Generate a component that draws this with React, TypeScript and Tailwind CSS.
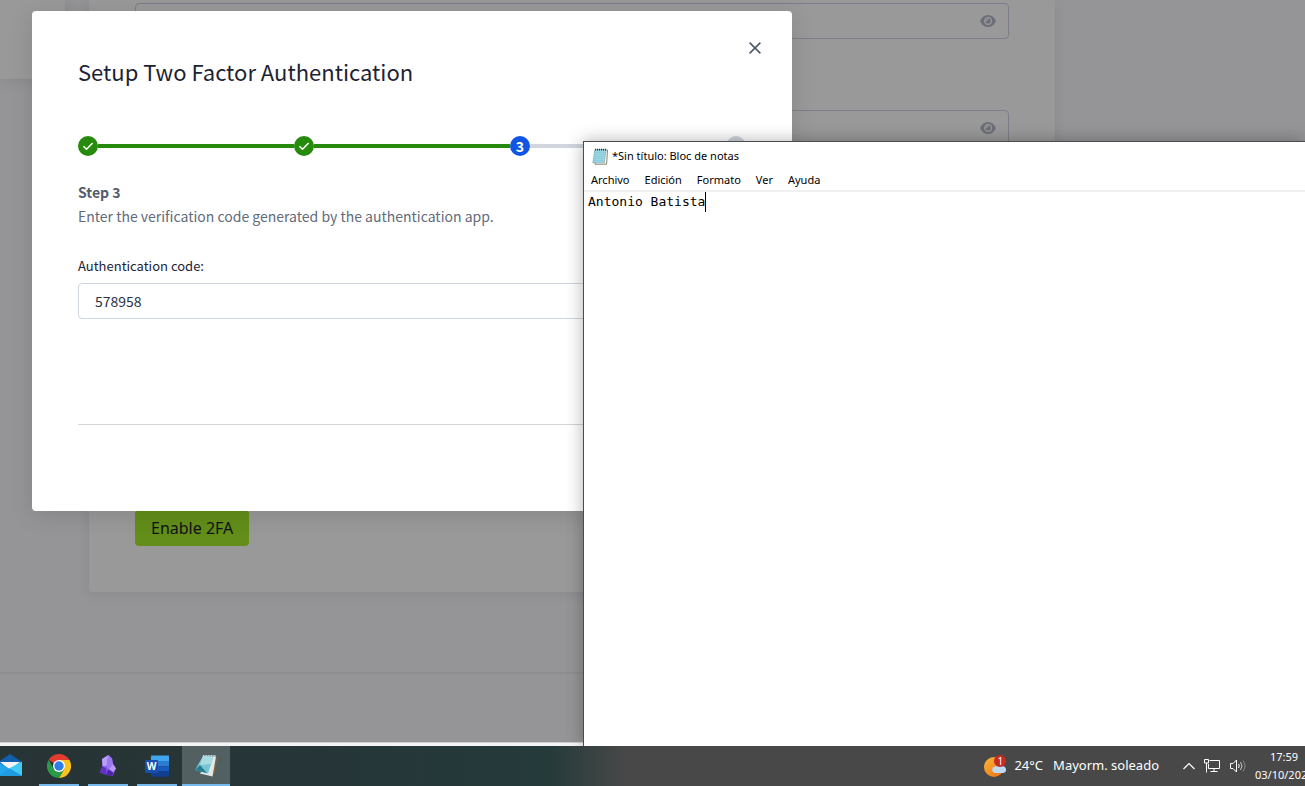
import React from "react";

const sourceSans = "font-['Noto_Sans_CJK_SC',sans-serif]";
const segoe = "font-['Noto_Sans','Open_Sans',sans-serif]";

function EyeIcon() {
  return (
    <svg width="16" height="12" viewBox="0 0 16 12">
      <path d="M0 6Q2.600 0 8 0T16 6Q13.400 12 8 12T0 6z" fill="currentColor" />
      <circle cx="8" cy="6" r="3.4" fill="none" stroke="white" strokeWidth="1.2" />
      <path d="M5.200 5.800A2 2 0 0 0 7.800 3.200" fill="white" stroke="white" strokeWidth=".8" />
    </svg>
  );
}

function PasswordField({ id, label }: { id: string; label: string }) {
  return (
    <div className="flex h-9 w-full items-center rounded border border-[#cdd3df] pr-3">
      <input id={id} type="password" aria-label={label} className="h-full min-w-0 flex-1 bg-transparent px-4 outline-none" />
      <button type="button" aria-label="Show password" className="text-[#b4bac6]">
        <EyeIcon />
      </button>
    </div>
  );
}

function SettingsPage() {
  return (
    <div className="flex flex-1 flex-col bg-[#f8f8fc]">
      <div className="flex items-start gap-6">
        <aside className="h-[79px] w-[65px] shrink-0 bg-white shadow-[0_2px_12px_rgba(60,60,80,0.1)]" />
        <section className="w-[966px] rounded-b bg-white px-[46px] pt-[3px] pb-[46px] shadow-[0_2px_12px_rgba(60,60,80,0.1)]">
          <PasswordField id="new-password" label="New password" />
          <div className="h-[71px]" />
          <PasswordField id="repeat-password" label="Repeat password" />
          <button
            type="button"
            className="mt-[364px] flex h-9 items-center rounded bg-[#a3ed2a] px-4 font-['Noto_Sans','Open_Sans',sans-serif] text-base text-[#1b2030]"
          >
            Enable 2FA
          </button>
        </section>
      </div>
      <footer className="mt-20 flex-1 border-t-2 border-[#ededf0]" />
    </div>
  );
}

function Check() {
  return (
    <svg width="12" height="12" viewBox="0 0 12 12" fill="none" stroke="white" strokeWidth="1.5">
      <path d="M1.4 6.2 4.5 9.2 10.6 3" />
    </svg>
  );
}

function Stepper() {
  const dot = "flex size-5 shrink-0 items-center justify-center rounded-full text-sm leading-5 font-bold";
  return (
    <ol className="flex items-center">
      <li className={`${dot} bg-[#268a0c]`}><Check /></li>
      <li aria-hidden="true" className="h-1 flex-1 bg-[#268a0c]" />
      <li className={`${dot} bg-[#268a0c]`}><Check /></li>
      <li aria-hidden="true" className="h-1 flex-1 bg-[#268a0c]" />
      <li className={`${dot} bg-[#1254e4] text-white`}>3</li>
      <li aria-hidden="true" className="h-1 flex-1 bg-[#d0d5de]" />
      <li className={`${dot} bg-[#d0d5de] text-[#1d2333]`}>4</li>
    </ol>
  );
}

function TwoFactorDialog() {
  return (
    <div
      role="dialog"
      aria-labelledby="dialog-title"
      className={`absolute top-[11px] left-8 w-[760px] rounded bg-white px-[46px] pt-[42px] pb-[86px] shadow-[0_4px_24px_rgba(0,0,0,0.12)] ${sourceSans}`}
    >
      <button type="button" aria-label="Close" className="absolute top-7 right-7 flex size-[18px] items-center justify-center text-[#4f586b]">
        <svg width="12" height="12" viewBox="0 0 12 12" fill="none" stroke="currentColor" strokeWidth="1.6">
          <path d="M.6.6 11.4 11.4M11.4.6.6 11.4" />
        </svg>
      </button>
      <h1 id="dialog-title" className="mb-[47px] text-[22px] leading-9 text-[#1d2333]">Setup Two Factor Authentication</h1>
      <Stepper />
      <h2 className="mt-6 text-sm leading-6 font-bold text-[#545c6d]">Step 3</h2>
      <p className="text-sm leading-6 text-[#626b7c]">Enter the verification code generated by the authentication app.</p>
      <label htmlFor="code" className="mt-7 mb-[7px] block text-[13px] leading-5 text-[#1d2333]">Authentication code:</label>
      <input id="code" defaultValue="578958" className="h-9 w-full rounded border border-[#cfd5df] px-4 text-sm text-[#2b3245] outline-none" />
      <hr className="mt-[105px] border-[#d5d5d8]" />
    </div>
  );
}

function NotepadIcon() {
  return (
    <svg width="16" height="17" viewBox="0 0 16 17">
      <path d="M3.5 2H15.5L14.6 16.2H3z" fill="#fff" stroke="#8f8164" />
      <path d="M2.8 1.8H14L12.3 14.8H.8z" fill="#9bd6e4" stroke="#6aa5b5" strokeWidth=".6" />
      <path d="M3 4.5h10M2.7 6.5h10M2.4 8.5h10M2.1 10.5h10M1.8 12.5h10" stroke="#7fc0d0" strokeWidth=".5" />
      <path d="M3 1.6h11" stroke="#334" strokeWidth="1.6" strokeDasharray="1 1" />
    </svg>
  );
}

function NotepadWindow() {
  return (
    <div className="absolute top-[141px] right-0 bottom-0 left-[583px] flex flex-col border-t border-l border-[#4b4b4d] bg-white shadow-[0_0_16px_rgba(0,0,0,0.3)]">
      <header className={`flex h-[29px] items-center gap-1 pl-2 text-black ${segoe}`}>
        <NotepadIcon />
        <h2 className="text-[11px]">*Sin título: Bloc de notas</h2>
      </header>
      <nav className={`flex h-[21px] items-center gap-[15px] border-b-2 border-[#f0f0f0] pl-[7px] text-[11px] text-black ${segoe}`}>
        <button type="button">Archivo</button>
        <button type="button">Edición</button>
        <button type="button">Formato</button>
        <button type="button">Ver</button>
        <button type="button">Ayuda</button>
      </nav>
      <div role="textbox" aria-label="Editor" className="flex flex-1 items-start pl-1 font-['DejaVu_Sans_Mono',monospace] text-[13px] leading-5 text-black">
        <span className="border-r border-black">Antonio Batista</span>
      </div>
    </div>
  );
}

function MailIcon() {
  return (
    <svg width="22" height="24" viewBox="0 0 22 24">
      <path d="M-2 8 10 0 22 8v4H-2z" fill="#0f5fae" />
      <path d="M0 8h20L10 16z" fill="#f4f4f4" />
      <path d="M-2 8 22 22H-2z" fill="#23a7ec" />
      <path d="M22 7.5V22L9 14.6z" fill="#43cbf8" />
      <path d="M-2 22 9.5 14.5 22 22z" fill="#1f9be2" />
    </svg>
  );
}

function ChromeIcon() {
  return (
    <svg width="24" height="24" viewBox="0 0 24 24">
      <path d="M12 12 1.6 6A12 12 0 0 1 22.4 6z" fill="#e33b2e" />
      <path d="M12 6H22.4A12 12 0 0 1 12 24L17.2 15z" fill="#fcc31e" />
      <path d="M1.6 6 6.8 15 12 18l5.2-3L12 24A12 12 0 0 1 1.6 6z" fill="#2a9a48" />
      <circle cx="12" cy="12" r="6" fill="#fff" />
      <circle cx="12" cy="12" r="4.7" fill="#2f7de9" />
    </svg>
  );
}

function ObsidianIcon() {
  return (
    <svg width="18" height="24" viewBox="0 0 18 24">
      <path d="M3 5 9.5 1 13 4.5 14 10 17 14.5 13.5 22 8 21 1 18.5 3.5 12z" fill="#8a5cf0" />
      <path d="M3 5 9.5 1 7.5 12 3.5 12z" fill="#b9a0f5" />
      <path d="M9.5 1 13 4.5 14 10 9 15 7.5 12z" fill="#9b78f2" />
      <path d="M3.5 12 7.5 15 7 21 1 18.5z" fill="#6231c4" />
      <path d="M7 21 9 15.5 14 18 13.5 22z" fill="#4d23a8" />
      <path d="M14 10 17 14.5 14 18 10 15z" fill="#b79bf8" />
    </svg>
  );
}

function WordIcon() {
  return (
    <span className="relative flex">
      <svg width="24" height="22" viewBox="0 0 24 22">
        <path d="M7 .5H23.5Q24 .5 24 1V6H6V1.5Q6 .5 7 .5z" fill="#41a5ee" />
        <path d="M6 6h18v5.3H6z" fill="#2b7cd3" />
        <path d="M6 11.3h18v5H6z" fill="#185abd" />
        <path d="M6 16.3h18V21q0 .7-.7.7H7q-1 0-1-1z" fill="#103f91" />
        <rect y="5" width="13" height="13" rx="1" fill="#174fae" />
      </svg>
      <span className="absolute top-[5px] left-0 w-[13px] text-center font-['Open_Sans',sans-serif] text-[10px] leading-[13px] font-bold text-white">W</span>
    </span>
  );
}

function NotepadTaskIcon() {
  return (
    <svg width="24" height="24" viewBox="0 0 24 24">
      <path d="M20 2.5 23 4 21 19 18 22z" fill="#80613c" />
      <path d="M19 2.5H22L18.5 22.5 6 19.5z" fill="#dfe9ea" />
      <path d="M9 2 19.5 2.500 14 19.5 1 16z" fill="#79c4cf" />
      <path d="M1 16 6 11 13 19.2z" fill="#237f91" />
      <path d="M9 2 19.5 2.500 17 10 6 11z" fill="#a8dce2" />
      <path d="M9 1.7h13" stroke="#d8dada" strokeWidth="1.5" strokeDasharray="1 .6" />
    </svg>
  );
}

function TaskButton({ label, active, children }: { label: string; active?: boolean; children: React.ReactNode }) {
  return (
    <button
      type="button"
      aria-label={label}
      className={
        active
          ? "flex h-10 w-12 items-center justify-center border-b-2 border-[#76b9ed] bg-[#536062] pt-px"
          : "flex h-10 w-10 items-center justify-center border-b-2 border-[#76b9ed] pt-px"
      }
    >
      {children}
    </button>
  );
}

function WeatherIcon() {
  return (
    <span className="relative flex">
      <svg width="24" height="24" viewBox="0 0 24 24">
        <defs>
          <linearGradient id="sun" x1="0" y1="0" x2="1" y2="1">
            <stop offset="0" stopColor="#fbb73a" />
            <stop offset="1" stopColor="#ed6d12" />
          </linearGradient>
        </defs>
        <circle cx="10" cy="13" r="10" fill="url(#sun)" />
        <path d="M11 19a3.3 3.3 0 0 1 0-6.5 4.5 4.5 0 0 1 8 0 3.3 3.3 0 0 1 .5 6.5z" fill="#bcd9f8" />
        <circle cx="16" cy="7" r="6" fill="#c62a21" />
      </svg>
      <span className="absolute top-px left-[10px] w-3 text-center text-[10px] leading-3 text-white">1</span>
    </span>
  );
}

function Taskbar() {
  return (
    <footer className={`flex h-10 shrink-0 items-center justify-between overflow-hidden bg-[linear-gradient(to_right,#283436_0%,#263638_25%,#253a3a_42%,#484848_48%,#484848_100%)] text-white ${segoe}`}>
      <div className="flex items-center">
        <button type="button" aria-label="Mail" className="mr-[17px] flex h-10 items-center">
          <MailIcon />
        </button>
        <div className="flex gap-[9px]">
          <TaskButton label="Chrome"><ChromeIcon /></TaskButton>
          <TaskButton label="Obsidian"><ObsidianIcon /></TaskButton>
          <TaskButton label="Word"><WordIcon /></TaskButton>
        </div>
        <div className="ml-[5px]">
          <TaskButton label="Bloc de notas" active><NotepadTaskIcon /></TaskButton>
        </div>
      </div>
      <div className="flex items-center">
        <button type="button" className="flex items-center text-[13px] whitespace-nowrap">
          <WeatherIcon />
          <span className="ml-[6px]">24°C</span>
          <span className="ml-[10px]">Mayorm. soleado</span>
        </button>
        <div className="ml-6 flex items-center gap-[9px]">
          <svg width="12" height="8" viewBox="0 0 12 8" fill="none" stroke="white" strokeWidth="1.2">
            <path d="M.5 7 6 1.5 11.5 7" />
          </svg>
          <svg width="17" height="14" viewBox="0 0 17 14" fill="none" stroke="white">
            <path d="M5.5 1.5h10v8h-11V5M10 9.5v3M6.5 12.5h7M.5.5h4v3.5h-4zM2.5 4v9.5" />
          </svg>
          <svg width="17" height="14" viewBox="0 0 17 14" fill="none" stroke="white">
            <path d="M.5 4.5H3L6.5 1v12L3 9.5H.5zM8.500 5q1.5 2 0 4" />
            <path d="M10.5 3q3 4 0 8" opacity=".7" />
            <path d="M13 1.500q4 5.500 0 11" opacity=".35" />
          </svg>
        </div>
        <button type="button" className="ml-2 w-[50px] text-left text-[11px] leading-[18px] whitespace-nowrap">
          <span className="block pl-[15px]">17:59</span>
          <span className="block">03/10/202</span>
        </button>
      </div>
    </footer>
  );
}

export default function App() {
  return (
    <div className="flex h-screen flex-col overflow-hidden">
      <main className="relative flex flex-1 flex-col overflow-hidden">
        <SettingsPage />
        <div className="h-1 border-t border-[#cfcfcf] bg-[#f4f4f4]" />
        <div className="absolute inset-x-0 top-0 bottom-1 bg-black/40" />
        <TwoFactorDialog />
        <NotepadWindow />
      </main>
      <Taskbar />
    </div>
  );
}
